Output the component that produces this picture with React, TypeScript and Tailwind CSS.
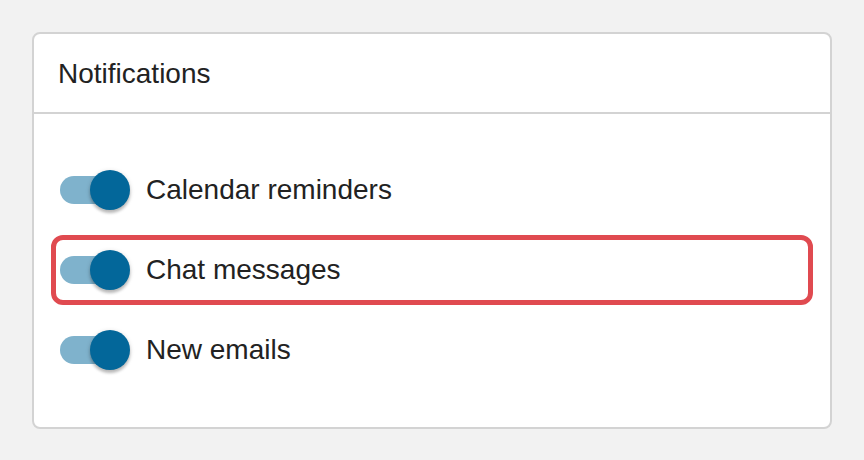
import React, { useState } from 'react';

type Item = { id: string; label: string };

const items: Item[] = [
    { id: 'calendar', label: 'Calendar reminders' },
    { id: 'chat', label: 'Chat messages' },
    { id: 'email', label: 'New emails' },
];

const Toggle: React.FC<{ on: boolean; onClick: () => void }> = ({ on, onClick }) => (
    <button
        type="button"
        onClick={onClick}
        className="relative flex h-[40px] w-[70px] shrink-0 items-center"
        aria-pressed={on}
    >
        <span className={`h-[28px] w-[68px] rounded-full ${on ? 'bg-[#7fb2cc]' : 'bg-[#b8b8b8]'}`} />
        <span
            className={`absolute top-0 h-[40px] w-[40px] rounded-full shadow-[0_3px_3px_rgba(0,0,0,0.22),0_1px_5px_rgba(0,0,0,0.14)] ${
                on ? 'left-[30px] bg-[#03679a]' : 'left-[-2px] bg-[#fafafa]'
            }`}
        />
    </button>
);

const App: React.FC = () => {
    const [enabled, setEnabled] = useState<Record<string, boolean>>({ calendar: true, chat: true, email: true });

    const toggle = (id: string) => setEnabled(prev => ({ ...prev, [id]: !prev[id] }));

    return (
        <div className="min-h-screen bg-[#f2f2f2] pt-[32px] pl-[32px] font-['Liberation_Sans',Arial,sans-serif] text-[#222]">
            <section className="w-[800px] rounded-[8px] border-2 border-[#d3d3d3] bg-white">
                <header className="flex h-[80px] items-center border-b-2 border-[#d3d3d3] px-[24px] pt-[2px]">
                    <h2 className="text-[28px] leading-none">Notifications</h2>
                </header>
                <div className="flex flex-col gap-[10px] px-[17px] pt-[41px] pb-[42px]">
                    {items.map(item => (
                        <div
                            key={item.id}
                            className={`flex h-[70px] items-center gap-[16px] rounded-[12px] border-[5px] pl-[4px] ${
                                item.id === 'chat' ? 'border-[#e04a50]' : 'border-transparent'
                            }`}
                        >
                            <Toggle on={enabled[item.id]} onClick={() => toggle(item.id)} />
                            <span className="text-[28px] leading-none">{item.label}</span>
                        </div>
                    ))}
                </div>
            </section>
        </div>
    );
};

export default App;
